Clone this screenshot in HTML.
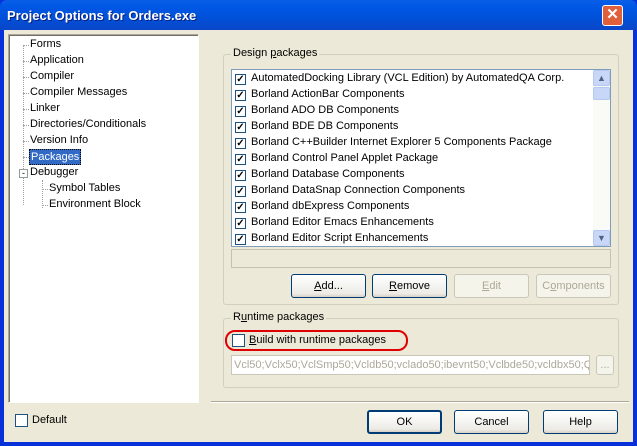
<!DOCTYPE html><html><head><style>
*{margin:0;padding:0;box-sizing:border-box}
body{width:637px;height:446px;overflow:hidden;font-family:"Liberation Sans",sans-serif;font-size:11px;background:#0831d9;position:relative}
.a{position:absolute}
.client{left:4px;top:30px;width:629px;height:412px;background:#ece9d8}
.title{left:0;top:0;width:637px;height:30px;background:linear-gradient(#0a5fe6,#0058e6 20%,#0050d8 60%,#0a46c8);border-radius:7px 7px 0 0}
.tt{left:7px;top:8px;color:#fff;font-weight:bold;font-size:13px;text-shadow:1px 1px #0a1e80;font-family:"Liberation Sans",sans-serif}
.close{left:602px;top:5px;width:21px;height:21px;background:#e0603c;border:1px solid #fff;border-radius:3px;color:#fff;font-weight:bold;text-align:center;line-height:18px;font-size:15px}
.tree{left:8px;top:34px;width:191px;height:369px;background:#fff;border:1px solid;border-color:#aca899 #fff #fff #aca899;box-shadow:inset 1px 1px #716f64}
.ti{position:absolute;white-space:nowrap}
.h{position:absolute;border-top:1px dotted #a0a0a0;width:6px;height:0}
.gb{border:1px solid #d0d0bf;border-radius:3px}
.gl{background:#ece9d8;padding:0 2px}
.list{left:231px;top:69px;width:380px;height:178px;background:#fff;border:1px solid #7f9db9;overflow:hidden}
.row{position:absolute;left:3px;height:16px;white-space:nowrap;line-height:16px}
.cb{display:inline-block;width:11px;height:11px;border:1px solid #1c5180;vertical-align:-1px;margin-right:5px;font-size:10px;line-height:9px;text-align:center;font-weight:bold}
.btn{border:1px solid #003c74;border-radius:3px;background:linear-gradient(#fff,#ecebe6 85%,#d6d0c5);text-align:center;line-height:22px;height:24px}
.dis{color:#aca899;border-color:#c9c7ba;background:#f5f4ea}
.sb{left:593px;top:70px;width:17px;height:176px;background:#fafaf6}
.sbb{position:absolute;left:0;width:17px;height:16px;background:#c8d6f8;border:1px solid #b4c8f0;border-radius:2px;color:#4d6185;font-size:9px;text-align:center;line-height:14px}
</style></head><body>
<div class="a title"></div>
<div class="a tt">Project Options for Orders.exe</div>
<div class="a close">✕</div>
<div class="a client"></div>
<div class="a tree">
<div class="h" style="left:14px;top:10px;height:160px;width:0;border-left:1px dotted #a0a0a0;border-top:0"></div>
<div class="h" style="left:14px;top:10px"></div><div class="h" style="left:14px;top:26px"></div><div class="h" style="left:14px;top:42px"></div><div class="h" style="left:14px;top:58px"></div><div class="h" style="left:14px;top:74px"></div><div class="h" style="left:14px;top:90px"></div><div class="h" style="left:14px;top:106px"></div><div class="h" style="left:14px;top:122px"></div>
<div class="ti" style="left:21px;top:3px">Forms</div>
<div class="ti" style="left:21px;top:19px">Application</div>
<div class="ti" style="left:21px;top:35px">Compiler</div>
<div class="ti" style="left:21px;top:51px">Compiler Messages</div>
<div class="ti" style="left:21px;top:67px">Linker</div>
<div class="ti" style="left:21px;top:83px">Directories/Conditionals</div>
<div class="ti" style="left:21px;top:99px">Version Info</div>
<div class="ti" style="left:20px;top:114px;background:#316ac5;color:#fff;padding:1px 1px;border:1px dotted #000">Packages</div>
<div class="ti" style="left:10px;top:134px;width:9px;height:9px;border:1px solid #919b9c;background:#fff;font-size:9px;line-height:6px;text-align:center">-</div>
<div class="ti" style="left:21px;top:131px">Debugger</div>
<div class="h" style="left:33px;top:145px;height:28px;width:0;border-left:1px dotted #a0a0a0;border-top:0"></div>
<div class="h" style="left:33px;top:154px"></div><div class="h" style="left:33px;top:170px"></div>
<div class="ti" style="left:40px;top:147px">Symbol Tables</div>
<div class="ti" style="left:40px;top:163px">Environment Block</div>
</div>
<div class="a gb" style="left:223px;top:54px;width:396px;height:251px"></div>
<div class="a gl" style="left:231px;top:47px">Design <u>p</u>ackages</div>
<div class="a list">
<div class="row" style="top:0px"><span class="cb">✓</span>AutomatedDocking Library (VCL Edition) by AutomatedQA Corp.</div>
<div class="row" style="top:16px"><span class="cb">✓</span>Borland ActionBar Components</div>
<div class="row" style="top:32px"><span class="cb">✓</span>Borland ADO DB Components</div>
<div class="row" style="top:48px"><span class="cb">✓</span>Borland BDE DB Components</div>
<div class="row" style="top:64px"><span class="cb">✓</span>Borland C++Builder Internet Explorer 5 Components Package</div>
<div class="row" style="top:80px"><span class="cb">✓</span>Borland Control Panel Applet Package</div>
<div class="row" style="top:96px"><span class="cb">✓</span>Borland Database Components</div>
<div class="row" style="top:112px"><span class="cb">✓</span>Borland DataSnap Connection Components</div>
<div class="row" style="top:128px"><span class="cb">✓</span>Borland dbExpress Components</div>
<div class="row" style="top:144px"><span class="cb">✓</span>Borland Editor Emacs Enhancements</div>
<div class="row" style="top:160px"><span class="cb">✓</span>Borland Editor Script Enhancements</div>
</div>
<div class="a sb"><div class="sbb" style="top:0">▲</div><div class="sbb" style="top:17px;height:13px"></div><div class="sbb" style="top:160px">▼</div></div>
<div class="a" style="left:231px;top:249px;width:380px;height:19px;border:1px solid #c5c2b2;background:#ece9d8"></div>
<div class="a btn" style="left:291px;top:274px;width:75px"><u>A</u>dd...</div>
<div class="a btn" style="left:372px;top:274px;width:75px"><u>R</u>emove</div>
<div class="a btn dis" style="left:454px;top:274px;width:75px"><u>E</u>dit</div>
<div class="a btn dis" style="left:536px;top:274px;width:75px">C<u>o</u>mponents</div>
<div class="a gb" style="left:223px;top:318px;width:396px;height:70px"></div>
<div class="a gl" style="left:231px;top:311px">R<u>u</u>ntime packages</div>
<div class="a" style="left:232px;top:334px;width:13px;height:13px;border:1px solid #1c5180;background:#fff"></div>
<div class="a" style="left:249px;top:334px"><u>B</u>uild with runtime packages</div>
<div class="a" style="left:225px;top:330px;width:183px;height:21px;border:2px solid #e00000;border-radius:10px"></div>
<div class="a" style="left:231px;top:355px;width:359px;height:20px;border:1px solid #c9c7ba;background:#fff;color:#aca899;padding:3px 2px;white-space:nowrap;overflow:hidden">Vcl50;Vclx50;VclSmp50;Vcldb50;vclado50;ibevnt50;Vclbde50;vcldbx50;Qrpt50</div>
<div class="a btn dis" style="left:596px;top:355px;width:18px;height:20px;line-height:18px">...</div>
<div class="a" style="left:211px;top:401px;width:418px;border-top:1px solid #aca899;border-bottom:1px solid #fff"></div>
<div class="a" style="left:15px;top:414px;width:13px;height:13px;border:1px solid #1c5180;background:#fff"></div>
<div class="a" style="left:32px;top:414px">Default</div>
<div class="a btn" style="left:367px;top:410px;width:75px;border-width:2px;line-height:20px">OK</div>
<div class="a btn" style="left:454px;top:410px;width:75px">Cancel</div>
<div class="a btn" style="left:543px;top:410px;width:75px">Help</div>
</body></html>
